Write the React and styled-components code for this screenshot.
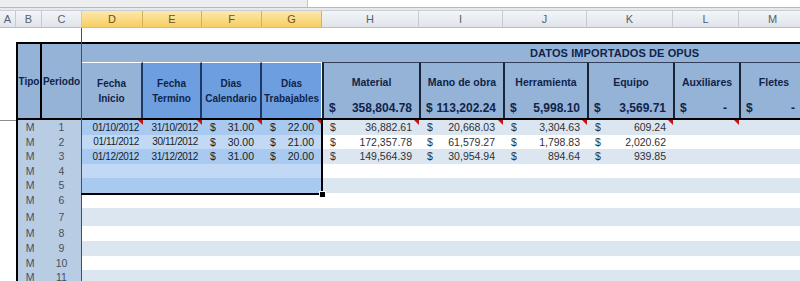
import React from "react";
import styled, { createGlobalStyle } from "styled-components";

const GlobalStyle = createGlobalStyle`
  html, body {
    margin: 0;
    padding: 0;
    background: #fff;
  }
  body {
    font-family: "Liberation Sans", Arial, sans-serif;
  }
`;

// column widths in px, A..M
const COLS = [16, 26, 40, 61, 59, 60, 60, 97, 84, 84, 86, 66, 68];
const LETTERS = ["A", "B", "C", "D", "E", "F", "G", "H", "I", "J", "K", "L", "M"];
const sheetCols = COLS.map((w) => w + "px").join(" ");
// inside the table: B loses the 2px outer border
const tableCols = [24, ...COLS.slice(2)].map((w) => w + "px").join(" ");

const NAVY = "#10244a";
const HEAD = "#95b3d7";
const HEAD_SEL = "#6d9fe0";
const STRIPE = "#dce6f1";
const SEL_ODD = "#a8c9f0";
const SEL_EVEN = "#c2d9f6";

const Window = styled.div`
  position: relative;
  width: 800px;
  height: 281px;
  overflow: hidden;
  background: #fff;
`;

const FormulaStrip = styled.div`
  display: flex;
  height: 7px;
  border-bottom: 1px solid #b3b9c2;
`;

const NameBox = styled.div`
  width: 307px;
  background: #eceef0;
  border-right: 1px solid #c4c8cc;
`;

const FormulaBox = styled.div`
  flex: 1;
  background: #fff;
`;

const StripGap = styled.div`
  height: 2px;
  background: #e6e9ed;
`;

const ColumnBar = styled.div`
  display: grid;
  grid-template-columns: ${sheetCols};
  height: 18px;
  box-sizing: border-box;
  border-top: 1px solid #c9ced5;
  border-bottom: 1px solid #b9bec6;
`;

const ColLetter = styled.div`
  display: flex;
  align-items: center;
  justify-content: center;
  font-size: 11px;
  color: ${(p) => (p.$sel ? "#6a5420" : "#56606d")};
  background: ${(p) =>
    p.$sel
      ? "linear-gradient(#fde9ad, #f7cd63)"
      : "linear-gradient(#f3f5f8, #e0e4e9)"};
  border-right: 1px solid ${(p) => (p.$sel ? "#d9b154" : "#c6cbd2")};
`;

const EmptyRow = styled.div`
  height: 14px;
`;

const TableArea = styled.div`
  display: flex;
`;

const ColA = styled.div`
  flex: none;
  width: 16px;
`;

const Table = styled.div`
  flex: none;
  width: 791px;
  border-top: 2px solid #000;
  border-left: 2px solid #000;
`;

const HeaderGrid = styled.div`
  display: grid;
  grid-template-columns: ${tableCols};
  grid-template-rows: 18px 56px;
  background: ${HEAD};
  border-bottom: 2px solid #000;
  color: ${NAVY};
`;

const SideHead = styled.div`
  grid-row: 1 / 3;
  display: flex;
  align-items: center;
  justify-content: center;
  box-sizing: border-box;
  font-size: 10px;
  font-weight: bold;
  border-right: ${(p) => (p.$thick ? "2px solid #000" : "1px solid #3a3a3a")};
`;

const DatosHead = styled.div`
  grid-column: 3 / -1;
  display: flex;
  align-items: center;
  padding-left: 448px;
  font-size: 11px;
  font-weight: bold;
  letter-spacing: 0.1px;
`;

const DateHead = styled.div`
  display: flex;
  align-items: center;
  justify-content: center;
  box-sizing: border-box;
  text-align: center;
  font-size: 10px;
  font-weight: bold;
  line-height: 15px;
  background: ${(p) => (p.$active ? HEAD : HEAD_SEL)};
  border-top: 1px solid #fff;
  border-right: ${(p) => (p.$last ? "1px solid #fff" : "2px solid #1d3865")};
`;

const SumHead = styled.div`
  display: flex;
  flex-direction: column;
  justify-content: space-between;
  box-sizing: border-box;
  padding: 12px 0 3px;
  border-top: 1px solid #34405a;
  border-left: 2px solid #1a2436;
`;

const SumTitle = styled.div`
  text-align: center;
  font-size: 10.5px;
  font-weight: bold;
  line-height: 14px;
`;

const SumTotal = styled.div`
  display: flex;
  justify-content: space-between;
  padding: 0 7px 0 5px;
  font-size: 12px;
  font-weight: bold;
  line-height: 14px;
`;

const Dash = styled.span`
  margin-right: 5px;
`;

const DataRow = styled.div`
  display: grid;
  grid-template-columns: ${tableCols};
  height: ${(p) => p.$h}px;
  font-size: 10.5px;
  line-height: ${(p) => p.$h}px;
`;

const SideCell = styled.div`
  box-sizing: border-box;
  text-align: center;
  background: #b8cce4;
  color: #47505c;
  border-right: ${(p) => (p.$freeze ? "1px solid #4a4a4a" : "none")};
`;

const Cell = styled.div`
  position: relative;
  box-sizing: border-box;
  background: ${(p) => p.$bg};
  color: ${(p) => (p.$sel ? "#1a1e26" : "#2e3238")};

  &::after {
    content: "";
    display: ${(p) => (p.$note ? "block" : "none")};
    position: absolute;
    top: 0;
    right: 0;
    border-top: 5px solid #cc1010;
    border-left: 5px solid transparent;
  }
`;

const DateCell = styled(Cell)`
  text-align: right;
  padding-right: 4px;
  font-size: 10px;
  letter-spacing: -0.35px;
`;

const MoneyCell = styled(Cell)`
  display: flex;
  justify-content: space-between;
  padding: 0 ${(p) => p.$pr || 7}px 0 8px;
`;

const Selection = styled.div`
  position: absolute;
  left: 81px;
  top: 119px;
  width: 242px;
  height: 76px;
  box-sizing: border-box;
  border-right: 2px solid #000;
  border-bottom: 2px solid #000;
  pointer-events: none;
`;

const FillHandle = styled.div`
  position: absolute;
  right: -5px;
  bottom: -5px;
  width: 5px;
  height: 5px;
  background: #000;
  border: 1px solid #fff;
`;

const FreezeV = styled.div`
  position: absolute;
  left: 81px;
  top: 28px;
  bottom: 0;
  width: 1px;
  background: #4d4d4d;
`;

const FreezeH = styled.div`
  position: absolute;
  left: 0;
  top: 120px;
  width: 16px;
  height: 1px;
  background: #8c8c8c;
`;

const HEIGHTS = [15, 14, 15, 14, 15, 15, 18, 15, 15, 14, 15];

const DATA = [
  ["01/10/2012", "31/10/2012", "31.00", "22.00", "36,882.61", "20,668.03", "3,304.63", "609.24"],
  ["01/11/2012", "30/11/2012", "30.00", "21.00", "172,357.78", "61,579.27", "1,798.83", "2,020.62"],
  ["01/12/2012", "31/12/2012", "31.00", "20.00", "149,564.39", "30,954.94", "894.64", "939.85"],
];

const TOTALS = [
  { title: "Material", value: "358,804.78" },
  { title: "Mano de obra", value: "113,202.24" },
  { title: "Herramienta", value: "5,998.10" },
  { title: "Equipo", value: "3,569.71" },
  { title: "Auxiliares", value: null },
  { title: "Fletes", value: null },
];

const DATE_HEADS = [
  ["Fecha", "Inicio"],
  ["Fecha", "Termino"],
  ["Dias", "Calendario"],
  ["Días", "Trabajables"],
];

const Money = ({ value, bg, sel, note, pr }) => (
  <MoneyCell $bg={bg} $sel={sel} $note={note} $pr={pr}>
    {value && <span>$</span>}
    {value && <span>{value}</span>}
  </MoneyCell>
);

const App = () => {
  return (
    <Window>
      <GlobalStyle />
      <FormulaStrip>
        <NameBox />
        <FormulaBox />
      </FormulaStrip>
      <StripGap />
      <ColumnBar>
        {LETTERS.map((l, i) => (
          <ColLetter key={l} $sel={i >= 3 && i <= 6}>
            {l}
          </ColLetter>
        ))}
      </ColumnBar>
      <EmptyRow />
      <TableArea>
        <ColA />
        <Table>
          <HeaderGrid>
            <SideHead $thick>Tipo</SideHead>
            <SideHead>Periodo</SideHead>
            <DatosHead>DATOS IMPORTADOS DE OPUS</DatosHead>
            {DATE_HEADS.map(([a, b], i) => (
              <DateHead key={b} $active={i === 0} $last={i === 3}>
                {a}
                <br />
                {b}
              </DateHead>
            ))}
            {TOTALS.map((t) => (
              <SumHead key={t.title}>
                <SumTitle>{t.title}</SumTitle>
                <SumTotal>
                  <span>$</span>
                  {t.value ? <span>{t.value}</span> : <Dash>-</Dash>}
                </SumTotal>
              </SumHead>
            ))}
          </HeaderGrid>
          {HEIGHTS.map((h, i) => {
            const d = DATA[i] || [];
            const stripe = i % 2 === 0 ? STRIPE : "#fff";
            const sel = i < 5;
            const selBg = sel ? (i % 2 === 0 ? SEL_ODD : SEL_EVEN) : stripe;
            const note = i === 0;
            return (
              <DataRow key={i} $h={h}>
                <SideCell>M</SideCell>
                <SideCell $freeze>{i + 1}</SideCell>
                <DateCell $bg={selBg} $sel={sel} $note={note}>
                  {d[0]}
                </DateCell>
                <DateCell $bg={selBg} $sel={sel} $note={note}>
                  {d[1]}
                </DateCell>
                <Money value={d[2]} bg={selBg} sel={sel} note={note} pr={8} />
                <Money value={d[3]} bg={selBg} sel={sel} note={note} pr={8} />
                <Money value={d[4]} bg={stripe} note={note} />
                <Money value={d[5]} bg={stripe} note={note} pr={8} />
                <Money value={d[6]} bg={stripe} note={note} />
                <Money value={d[7]} bg={stripe} note={note} />
                <Money bg={stripe} note={note} />
                <Money bg={stripe} />
              </DataRow>
            );
          })}
        </Table>
      </TableArea>
      <FreezeV />
      <FreezeH />
      <Selection>
        <FillHandle />
      </Selection>
    </Window>
  );
};

export default App;
